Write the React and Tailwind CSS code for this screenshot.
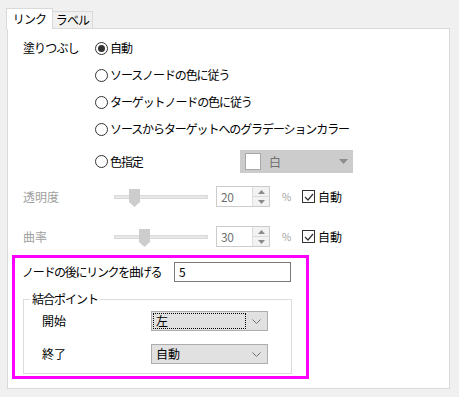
import React from 'react';

const font = { fontFamily: '"Noto Sans CJK JP", "Noto Sans", sans-serif' };

function Radio({ checked, label }) {
  return (
    <div className="flex items-center h-[20px]">
      <span className="w-[13px] h-[13px] rounded-full border border-[#333] bg-white flex items-center justify-center mr-[2px]">
        {checked && <span className="w-[7px] h-[7px] rounded-full bg-[#333]" />}
      </span>
      <span className="tracking-[-1.1px]">{label}</span>
    </div>
  );
}

function Slider({ thumb }) {
  return (
    <div className="relative w-[94px] h-[21px] flex items-center">
      <div className="w-full h-[4px] bg-[#e7e7e7] border border-[#dadada]" />
      <svg className="absolute top-[3px]" style={{ left: thumb }} width="11" height="18" viewBox="0 0 11 18">
        <path d="M0 0H11V13L5.5 18L0 13Z" fill="#cdcdcd" />
      </svg>
    </div>
  );
}

function SpinBox({ value }) {
  return (
    <div className="flex w-[54px] h-[21px] border border-[#cccccc] bg-white">
      <div className="flex-1 pl-[4px] text-[#707070] leading-[19px] tracking-[-0.5px]">{value}</div>
      <div className="w-[17px] flex flex-col border-l border-[#dcdcdc] bg-[#f2f2f2]">
        <div className="flex-1 flex items-center justify-center border-b border-[#dcdcdc]">
          <svg width="7" height="4" viewBox="0 0 7 4"><path d="M0 4L3.5 0L7 4Z" fill="#8a8a8a" /></svg>
        </div>
        <div className="flex-1 flex items-center justify-center">
          <svg width="7" height="4" viewBox="0 0 7 4"><path d="M0 0L3.5 4L7 0Z" fill="#8a8a8a" /></svg>
        </div>
      </div>
    </div>
  );
}

function Check({ label }) {
  return (
    <div className="flex items-center">
      <span className="w-[13px] h-[13px] border border-[#333] bg-white flex items-center justify-center mr-[3px]">
        <svg width="10" height="8" viewBox="0 0 10 8">
          <path d="M1 4L4 7L9 1" fill="none" stroke="#333" strokeWidth="1.2" />
        </svg>
      </span>
      <span>{label}</span>
    </div>
  );
}

function RangeRow({ label, thumb, value, mt }) {
  return (
    <div className={`flex items-center h-[21px] ${mt}`}>
      <span className="w-[106px] pl-[15px] text-[#a0a0a0]">{label}</span>
      <Slider thumb={thumb} />
      <div className="ml-[8px]">
        <SpinBox value={value} />
      </div>
      <span className="ml-[12px] text-[10px] text-[#a0a0a0] w-[20px]">%</span>
      <Check label="自動" />
    </div>
  );
}

function Chevron() {
  return (
    <svg width="9" height="5" viewBox="0 0 9 5">
      <path d="M0.5 0.5L4.5 4.5L8.5 0.5" fill="none" stroke="#707070" strokeWidth="1" />
    </svg>
  );
}

function Select({ value, focused }) {
  return (
    <div className="flex items-center w-[117px] h-[20px] bg-[#e1e1e1] border border-[#adadad] px-[1px]">
      <div className={`flex-1 h-[16px] flex items-center pl-[2px] ${focused ? 'border border-dotted border-black' : 'border border-transparent'}`}>
        {value}
      </div>
      <div className="w-[20px] flex items-center justify-center">
        <Chevron />
      </div>
    </div>
  );
}

export default function App() {
  return (
    <div className="w-[459px] h-[397px] bg-[#f0f0f0] pt-[8px] pl-[6px] text-[12px] text-black leading-none" style={font}>
      {/* Tabs */}
      <div className="flex items-end h-[20px] relative z-10">
        <div className="w-[47px] h-[21px] -mb-px bg-white border border-b-0 border-[#d9d9d9] flex items-center justify-center tracking-[-0.8px]">
          リンク
        </div>
        <div className="w-[40px] h-[17px] bg-[#f0f0f0] border border-l-0 border-b-0 border-[#d9d9d9] flex items-center justify-center tracking-[-0.8px]">
          ラベル
        </div>
      </div>

      {/* Panel */}
      <div className="ml-[1px] w-[443px] h-[361px] bg-white border border-[#d9d9d9] pt-[9px]">
        <div className="flex">
          <span className="w-[87px] pl-[15px] h-[20px] flex items-center tracking-[-0.9px]">塗りつぶし</span>
          <div className="flex flex-col gap-[7px]">
            <Radio checked label="自動" />
            <Radio label="ソースノードの色に従う" />
            <Radio label="ターゲットノードの色に従う" />
            <Radio label="ソースからターゲットへのグラデーションカラー" />
          </div>
        </div>

        <div className="flex items-center mt-[11px] h-[23px]">
          <div className="ml-[87px] w-[145px]">
            <Radio label="色指定" />
          </div>
          <div className="w-[113px] h-[23px] bg-[#cccccc] flex items-center pl-[5px] pr-[5px]">
            <span className="w-[16px] h-[17px] bg-white border border-[#a8a8a8]" />
            <span className="ml-[8px] text-[#707070] flex-1">白</span>
            <svg width="9" height="5" viewBox="0 0 9 5"><path d="M0 0H9L4.5 5Z" fill="#8c8c8c" /></svg>
          </div>
        </div>

        <RangeRow label="透明度" thumb={15} value="20" mt="mt-[13px]" />
        <RangeRow label="曲率" thumb={25} value="30" mt="mt-[19px]" />

        {/* Highlighted section */}
        <div className="ml-[4px] mt-[8px] w-[297px] h-[124px] border-[3px] border-[#ff00ff] pt-[4px] pl-[7px]">
          <div className="flex items-center h-[20px]">
            <span className="w-[152px] tracking-[-1.3px]">ノードの後にリンクを曲げる</span>
            <div className="w-[117px] h-[20px] border border-[#7a7a7a] flex items-center pl-[4px]">5</div>
          </div>
          <fieldset className="mt-[9px] ml-[1px] w-[269px] h-[83px] border border-[#dcdcdc] p-0">
            <legend className="ml-[6px] px-[2px] leading-[16px] tracking-[-1px]">結合ポイント</legend>
            <div className="flex items-center mt-[4px] pl-[18px]">
              <span className="w-[109px]">開始</span>
              <Select value="左" focused />
            </div>
            <div className="flex items-center mt-[13px] pl-[18px]">
              <span className="w-[109px]">終了</span>
              <Select value="自動" />
            </div>
          </fieldset>
        </div>
      </div>
    </div>
  );
}
